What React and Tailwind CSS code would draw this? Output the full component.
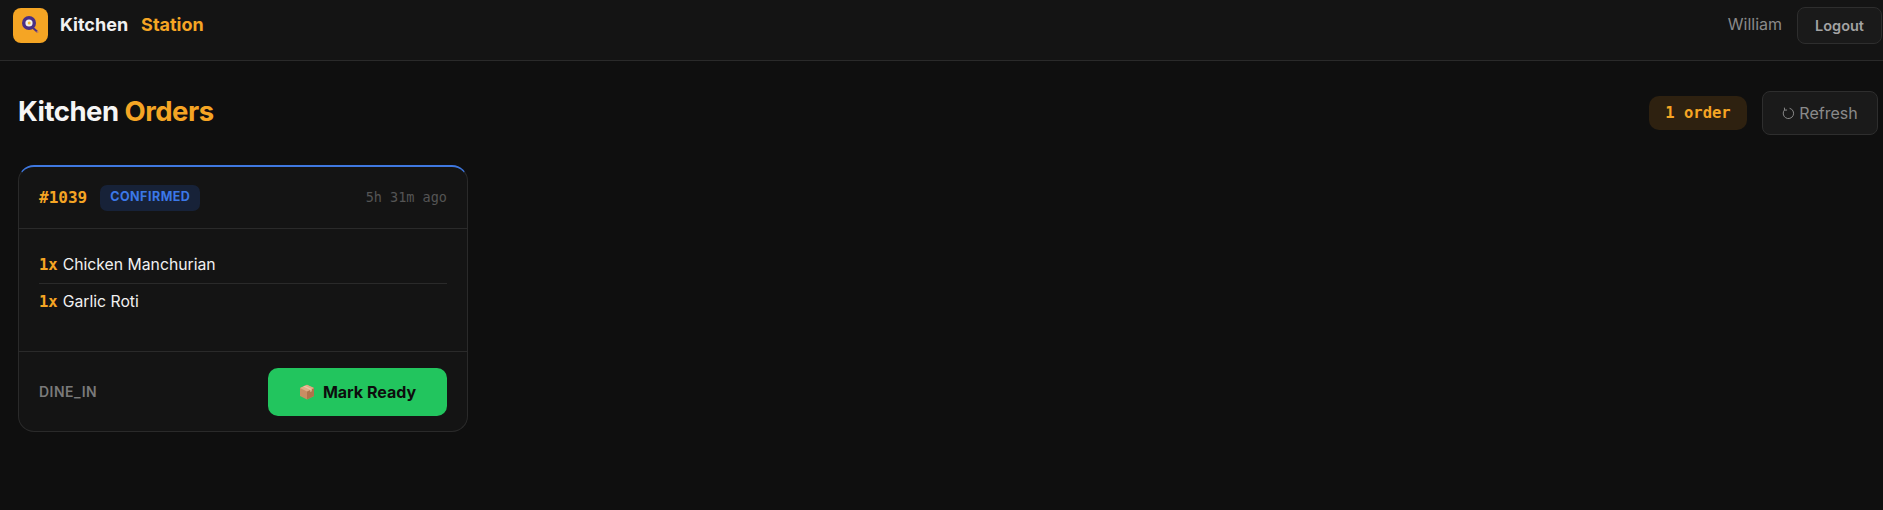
import React from 'react';

const sans = 'font-["Inter","Noto_Sans",sans-serif]';
const mono = 'font-["DejaVu_Sans_Mono","Liberation_Mono",monospace]';

const LogoPan = () => (
  <svg viewBox="0 0 35 35" className="w-[35px] h-[35px]">
    <rect width="35" height="35" rx="8" fill="#f5a524" />
    <line x1="19" y1="19" x2="24" y2="23.5" stroke="#4a2f85" strokeWidth="2" strokeLinecap="round" />
    <circle cx="24.5" cy="24" r="1.1" fill="#c9855a" />
    <circle cx="16" cy="15" r="7" fill="#4a2f85" />
    <circle cx="16" cy="15" r="3.6" fill="#f4f1e6" />
    <circle cx="16.2" cy="15" r="1.5" fill="#f5b93a" />
  </svg>
);

const BoxIcon = () => (
  <svg viewBox="0 0 16 16" className="w-4 h-4 shrink-0">
    <path d="M8 0.8 L15 4 L15 12 L8 15.4 L1 12 L1 4 Z" fill="#c98d63" />
    <path d="M8 7.4 L15 4 L15 12 L8 15.4 Z" fill="#b0734a" />
    <path d="M1 4 L8 0.8 L15 4 L8 7.4 Z" fill="#e0ad85" />
    <path d="M4.2 2.5 L11.2 5.7 L11.2 8 L12.8 7.2 L12.8 4.9 L5.8 1.8 Z" fill="#f0cfb2" opacity="0.7" />
  </svg>
);

const RefreshIcon = () => (
  <svg viewBox="0 0 12 12" className="w-[13px] h-[13px] shrink-0" fill="none" stroke="#8a8a8a" strokeWidth="0.9">
    <path d="M7 1.2 A4.8 4.8 0 1 1 2.4 2.6" />
    <path d="M2.2 0.6 L2.4 2.9 L4.7 2.8" />
  </svg>
);

const OrderLine = ({ name, last }) => (
  <div className={`py-[7px] text-[15.75px] leading-[22px] text-[#f1f1f1] ${last ? '' : 'border-b border-[#2a2a2a]'}`}>
    <span className={`${mono} font-bold text-[15.5px] text-[#f5a524] mr-[5px]`}>1x</span>
    {name}
  </div>
);

export default function App() {
  return (
    <div className={`${sans} min-h-[510px] bg-[#0f0f0f] text-white`}>
      <header className="h-[61px] bg-[#141414] border-b border-[#2a2a2a] flex items-start justify-between pl-[13px] pr-px pt-[8px]">
        <div className="flex items-center gap-3 h-[35px]">
          <LogoPan />
          <div className="flex gap-[13px] text-[18px] font-bold -mt-[2px]">
            <span className="text-[#f1f1f1]">Kitchen</span>
            <span className="text-[#f5a524]">Station</span>
          </div>
        </div>
        <div className="flex items-center gap-[15px] -mt-px">
          <span className="text-[16px] text-[#8a8a8a] -mt-[4px]">William</span>
          <button className="w-[85px] h-[37px] rounded-[8px] border border-[#2e2e2e] bg-[#1a1a1a] text-[14.5px] font-semibold text-[#a3a3a3]">
            Logout
          </button>
        </div>
      </header>

      <main className="pl-[18px] pr-[5px] pt-[30px]">
        <div className="flex items-center justify-between h-[44px] mb-[30px]">
          <h1 className="text-[27.5px] font-bold tracking-[-0.5px] text-[#f5f5f5] -mt-[3px]">
            Kitchen <span className="text-[#f5a524]">Orders</span>
          </h1>
          <div className="flex items-center gap-[15px]">
            <span className={`${mono} w-[98px] h-[34px] pt-[2px] flex items-center justify-center rounded-[10px] bg-[#2e2110] text-[15.5px] font-bold text-[#f5a524]`}>
              1 order
            </span>
            <button className="w-[116px] h-[44px] rounded-[8px] border border-[#2e2e2e] bg-[#1a1a1a] flex items-center justify-center gap-[4px] text-[16px] text-[#8a8a8a]">
              <RefreshIcon />
              Refresh
            </button>
          </div>
        </div>

        <div className="w-[450px] h-[267px] flex flex-col rounded-[16px] bg-[#141414] border border-[#2a2a2a] border-t-2 border-t-[#3f78e0]">
          <div className="h-[62px] flex items-center justify-between px-[20px] border-b border-[#2a2a2a]">
            <div className="flex items-center gap-[13px]">
              <span className={`${mono} text-[16px] font-bold text-[#f5a524]`}>#1039</span>
              <span className="h-[26px] px-[10px] flex items-center rounded-[7px] bg-[#172238] text-[12.5px] font-bold tracking-[0.5px] text-[#3b78e7]">
                CONFIRMED
              </span>
            </div>
            <span className={`${mono} text-[13.5px] text-[#555555]`}>5h 31m ago</span>
          </div>

          <div className="flex-1 px-[20px] pt-[18px] border-b border-[#2a2a2a]">
            <OrderLine name="Chicken Manchurian" />
            <OrderLine name="Garlic Roti" last />
          </div>

          <div className="h-[79px] flex items-center justify-between px-[20px]">
            <span className="text-[14px] font-semibold tracking-[0.5px] text-[#7a7a7a]">DINE_IN</span>
            <button className="w-[179px] h-[48px] pt-px rounded-[10px] bg-[#22c55e] flex items-center justify-center gap-[8px] text-[16px] font-bold text-[#0d0d0d]">
              <BoxIcon />
              Mark Ready
            </button>
          </div>
        </div>
      </main>
    </div>
  );
}
